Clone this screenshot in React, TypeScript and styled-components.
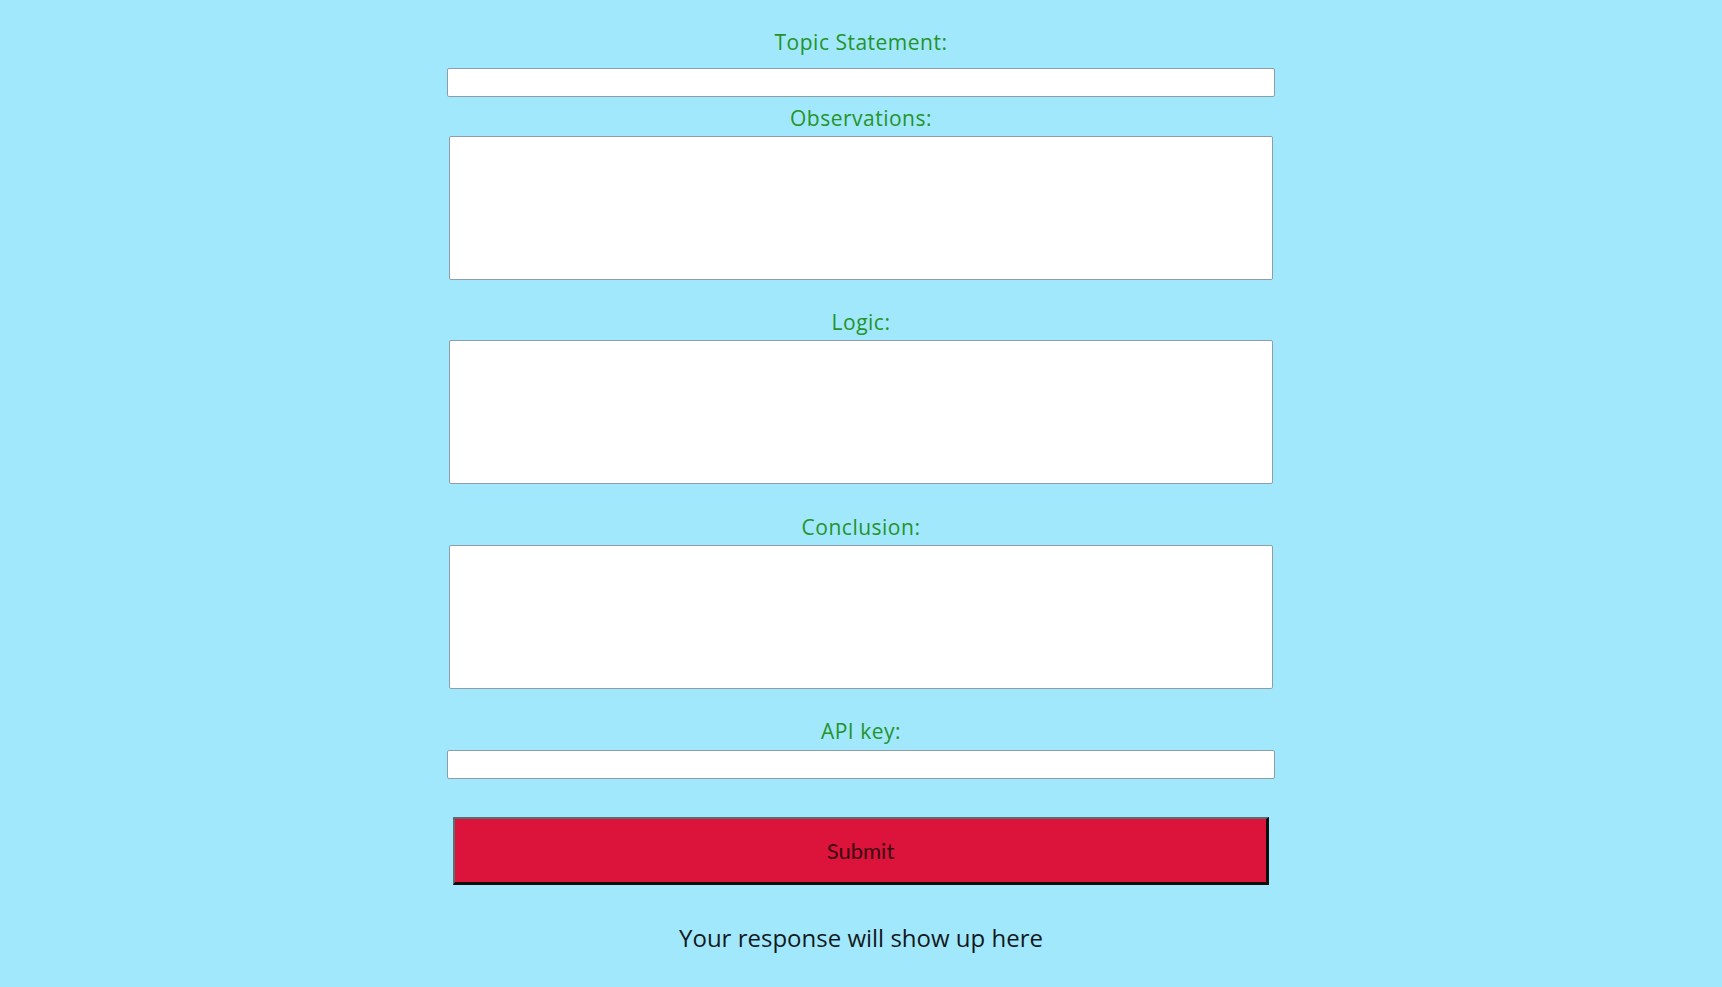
import React from "react";
import styled, { createGlobalStyle } from "styled-components";

const GlobalStyle = createGlobalStyle`
  html, body {
    margin: 0;
    padding: 0;
    background: #a2e8fd;
  }
  body {
    font-family: "Open Sans", "DejaVu Sans", sans-serif;
  }
`;

const Page = styled.main`
  min-height: 987px;
  background: #a2e8fd;
  display: flex;
  justify-content: center;
  padding-top: 30px;
  box-sizing: border-box;
`;

const Form = styled.form`
  width: 828px;
  display: flex;
  flex-direction: column;
  align-items: center;
`;

const Label = styled.label<{ $top: number }>`
  display: block;
  margin-top: ${(p) => p.$top}px;
  height: 24px;
  line-height: 24px;
  font-family: "Open Sans", "DejaVu Sans", sans-serif;
  font-size: 21px;
  letter-spacing: 0.5px;
  color: #24932a;
  text-align: center;
`;

const TextInput = styled.input<{ $top: number }>`
  box-sizing: border-box;
  margin-top: ${(p) => p.$top}px;
  width: 828px;
  height: 29px;
  border: 1px solid #8d9ea6;
  border-radius: 2px;
  background: #ffffff;
  padding: 2px 6px;
  font-size: 16px;
`;

const TextArea = styled.textarea<{ $top: number }>`
  box-sizing: border-box;
  display: block;
  margin-top: ${(p) => p.$top}px;
  width: 824px;
  height: 144px;
  border: 1px solid #8d9ea6;
  border-radius: 2px;
  background: #ffffff;
  resize: none;
  padding: 4px 6px;
  font-size: 16px;
`;

const SubmitButton = styled.button`
  box-sizing: border-box;
  margin-top: 38px;
  width: 816px;
  height: 68px;
  background: #dc143c;
  border-style: solid;
  border-width: 2px 3px 3px 2px;
  border-color: #5d6b72 #0d0d0d #0d0d0d #5d6b72;
  font-family: "Lato", "Open Sans", sans-serif;
  font-size: 22px;
  color: #3b0710;
  cursor: pointer;
`;

const Response = styled.p`
  margin: 38px 0 0;
  line-height: 30px;
  font-family: "Open Sans", "DejaVu Sans", sans-serif;
  font-size: 24px;
  color: #111a1c;
  text-align: center;
`;

export default function App() {
  return (
    <>
      <GlobalStyle />
      <Page>
        <Form onSubmit={(e) => e.preventDefault()}>
          <Label $top={0} htmlFor="topic">Topic Statement:</Label>
          <TextInput $top={14} id="topic" type="text" />

          <Label $top={9} htmlFor="obs">Observations:</Label>
          <TextArea $top={6} id="obs" />

          <Label $top={30} htmlFor="logic">Logic:</Label>
          <TextArea $top={6} id="logic" />

          <Label $top={31} htmlFor="conclusion">Conclusion:</Label>
          <TextArea $top={6} id="conclusion" />

          <Label $top={30} htmlFor="api">API key:</Label>
          <TextInput $top={7} id="api" type="text" />

          <SubmitButton type="submit">Submit</SubmitButton>

          <Response>Your response will show up here</Response>
        </Form>
      </Page>
    </>
  );
}
